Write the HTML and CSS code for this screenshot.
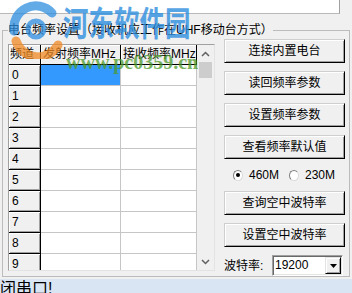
FILE: index.html
```html
<!DOCTYPE html>
<html>
<head>
<meta charset="utf-8">
<link rel="stylesheet" href="styles.css">
</head>
<body>
<div class="top"></div>
<fieldset class="group">
  <legend>电台频率设置（接收机应工作在UHF移动台方式）</legend>
  <div class="body">
    <div class="grid">
      <div class="table">
        <div class="row head"><div class="rh">频道</div><div class="ch">发射频率MHz</div><div class="ch">接收频率MHz</div></div>
        <div class="row"><div class="rh">0</div><div class="c sel"></div><div class="c"></div></div>
        <div class="row"><div class="rh">1</div><div class="c"></div><div class="c"></div></div>
        <div class="row"><div class="rh">2</div><div class="c"></div><div class="c"></div></div>
        <div class="row"><div class="rh">3</div><div class="c"></div><div class="c"></div></div>
        <div class="row"><div class="rh">4</div><div class="c"></div><div class="c"></div></div>
        <div class="row"><div class="rh">5</div><div class="c"></div><div class="c"></div></div>
        <div class="row"><div class="rh">6</div><div class="c"></div><div class="c"></div></div>
        <div class="row"><div class="rh">7</div><div class="c"></div><div class="c"></div></div>
        <div class="row"><div class="rh">8</div><div class="c"></div><div class="c"></div></div>
        <div class="row"><div class="rh">9</div><div class="c"></div><div class="c"></div></div>
      </div>
      <div class="vscroll">
        <div class="arrow"><svg width="9" height="6" viewBox="0 0 9 6"><path d="M1 5 L4.5 1.5 L8 5" fill="none" stroke="#606060" stroke-width="1.5"/></svg></div>
        <div class="thumb"></div>
        <div class="track"></div>
        <div class="arrow"><svg width="9" height="6" viewBox="0 0 9 6"><path d="M1 1 L4.5 4.5 L8 1" fill="none" stroke="#606060" stroke-width="1.5"/></svg></div>
      </div>
    </div>
    <div class="side">
      <div class="btn">连接内置电台</div>
      <div class="btn">读回频率参数</div>
      <div class="btn">设置频率参数</div>
      <div class="btn">查看频率默认值</div>
      <div class="radios">
        <span class="radio on"></span><span class="rlabel">460M</span>
        <span class="radio"></span><span class="rlabel">230M</span>
      </div>
      <div class="btn">查询空中波特率</div>
      <div class="btn">设置空中波特率</div>
      <div class="baud">
        <span class="blabel">波特率:</span>
        <div class="combo"><span class="cval">19200</span><span class="drop"><svg width="7" height="4" viewBox="0 0 7 4"><path d="M0 0 H7 L3.5 4 Z" fill="#000"/></svg></span></div>
      </div>
    </div>
  </div>
</fieldset>
<div class="status">闭串口!</div>
<div class="wm">
  <svg class="wm-logo" width="56" height="58" viewBox="0 0 56 58">
    <path d="M6 30 A22 22 0 0 1 44 12" fill="none" stroke="#2f8fe0" stroke-width="9" stroke-linecap="round"/>
    <circle cx="28" cy="28" r="8" fill="none" stroke="#2f8fe0" stroke-width="5"/>
    <path d="M8 40 A23 23 0 0 0 50 44" fill="none" stroke="#f08a24" stroke-width="9" stroke-linecap="round"/>
  </svg>
  <div class="wm-cn">河东软件园</div>
  <div class="wm-url">www.pc0359.cn</div>
</div>
</body>
</html>
```
FILE: styles.css
```css
html, body {
  margin: 0;
  padding: 0;
}
body {
  width: 352px;
  height: 293px;
  overflow: hidden;
  background: #f0f0f0;
  font: 12px/14px "Liberation Sans", "Noto Sans CJK SC", sans-serif;
  color: #000;
  position: relative;
}
.top {
  width: 339px;
  height: 13px;
  background: #fff;
  border-right: 1px solid #a0a0a0;
  border-bottom: 1px solid #b9b9b9;
}
.group {
  margin: 9px 2px 0 2px;
  padding: 2px 4px 0 5px;
  border: 1px solid #bcbcbc;
  min-width: 0;
}
.group legend {
  padding: 0;
  font: 12px/14px "Liberation Sans", "Noto Sans CJK SC", sans-serif;
}
.body {
  display: flex;
  gap: 9px;
}
.grid {
  box-sizing: border-box;
  width: 207px;
  height: 227px;
  margin-top: 5px;
  border: 1px solid #a0a0a0;
  border-right-color: #e3e3e3;
  border-bottom-color: #e3e3e3;
  display: flex;
  background: #fff;
}
.table {
  width: 188px;
  height: 225px;
  overflow: hidden;
}
.row {
  display: grid;
  grid-template-columns: 32px 80px 76px;
  height: 21px;
}
.row.head {
  height: 20px;
}
.rh, .ch, .c {
  box-sizing: border-box;
  border-right: 1px solid #c6c6c6;
  border-bottom: 1px solid #c6c6c6;
  white-space: nowrap;
  overflow: hidden;
}
.rh, .ch {
  background: #f0f0f0;
  border-right-color: #000;
  border-bottom-color: #000;
  box-shadow: inset 1px 1px 0 #fff, inset -1px -1px 0 #a0a0a0;
  padding-left: 3px;
  line-height: 20px;
}
.row.head .rh, .row.head .ch {
  line-height: 19px;
  box-shadow: inset 1px 1px 0 #fff;
}
.row.head .rh {
  padding-left: 1px;
}
.row.head .ch {
  padding-left: 2px;
}
.c {
  background: #fff;
}
.c.sel {
  background: #3399ff;
}
.vscroll {
  width: 17px;
  display: flex;
  flex-direction: column;
  background: #f0f0f0;
}
.arrow {
  height: 17px;
  display: flex;
  align-items: center;
  justify-content: center;
}
.thumb {
  height: 16px;
  margin: 0 2px;
  background: #cdcdcd;
}
.track {
  flex: 1;
}
.side {
  width: 121px;
  display: flex;
  flex-direction: column;
  gap: 8px;
}
.btn {
  box-sizing: border-box;
  height: 24px;
  border: 1px solid;
  border-color: #cfcfcf #000 #000 #cfcfcf;
  box-shadow: inset 1px 1px 0 #fff, inset -1px -1px 0 #a0a0a0;
  background: #f0f0f0;
  text-align: center;
  line-height: 22px;
  white-space: nowrap;
}
.radios {
  height: 16px;
  display: flex;
  align-items: center;
  padding-left: 9px;
}
.radio {
  box-sizing: border-box;
  width: 11px;
  height: 11px;
  border-radius: 50%;
  border: 1px solid;
  border-color: #808080 #dcdcdc #dcdcdc #808080;
  background: #fff;
  display: flex;
  align-items: center;
  justify-content: center;
}
.radio.on::after {
  content: "";
  width: 4px;
  height: 4px;
  border-radius: 50%;
  background: #000;
}
.rlabel {
  margin-left: 6px;
  margin-right: 10px;
}
.baud {
  height: 21px;
  display: flex;
  align-items: center;
}
.blabel {
  width: 48px;
  white-space: nowrap;
}
.combo {
  box-sizing: border-box;
  width: 71px;
  height: 21px;
  border: 1px solid;
  border-color: #a0a0a0 #fff #fff #a0a0a0;
  box-shadow: inset 1px 1px 0 #696969, inset -1px -1px 0 #e3e3e3;
  background: #fff;
  display: flex;
  align-items: center;
  padding: 1px 1px 1px 2px;
}
.cval {
  flex: 1;
  line-height: 17px;
}
.drop {
  box-sizing: border-box;
  width: 16px;
  height: 17px;
  background: #f0f0f0;
  border: 1px solid;
  border-color: #e3e3e3 #000 #000 #e3e3e3;
  box-shadow: inset 1px 1px 0 #fff, inset -1px -1px 0 #a0a0a0;
  display: flex;
  align-items: center;
  justify-content: center;
}
.status {
  margin-top: 2px;
  height: 14px;
  background: #dae5f3;
  font: 16px/20px "Liberation Sans", "Noto Sans CJK SC", sans-serif;
  overflow: hidden;
  white-space: nowrap;
}
.wm {
  position: absolute;
  left: 0;
  top: 0;
  width: 352px;
  height: 80px;
  pointer-events: none;
}
.wm-logo {
  position: absolute;
  left: 8px;
  top: 1px;
  opacity: 0.75;
}
.wm-cn {
  position: absolute;
  left: 63px;
  top: -1px;
  font: bold 25px/32px "Noto Sans CJK SC", sans-serif;
  color: #2f8fe0;
  opacity: 0.8;
  white-space: nowrap;
  transform: scale(1.02, 1.36);
  transform-origin: 0 0;
}
.wm-url {
  position: absolute;
  left: 66px;
  top: 50px;
  font: bold 20px/24px "Liberation Serif", serif;
  color: #4c9a2a;
  opacity: 0.75;
  white-space: nowrap;
}
```
